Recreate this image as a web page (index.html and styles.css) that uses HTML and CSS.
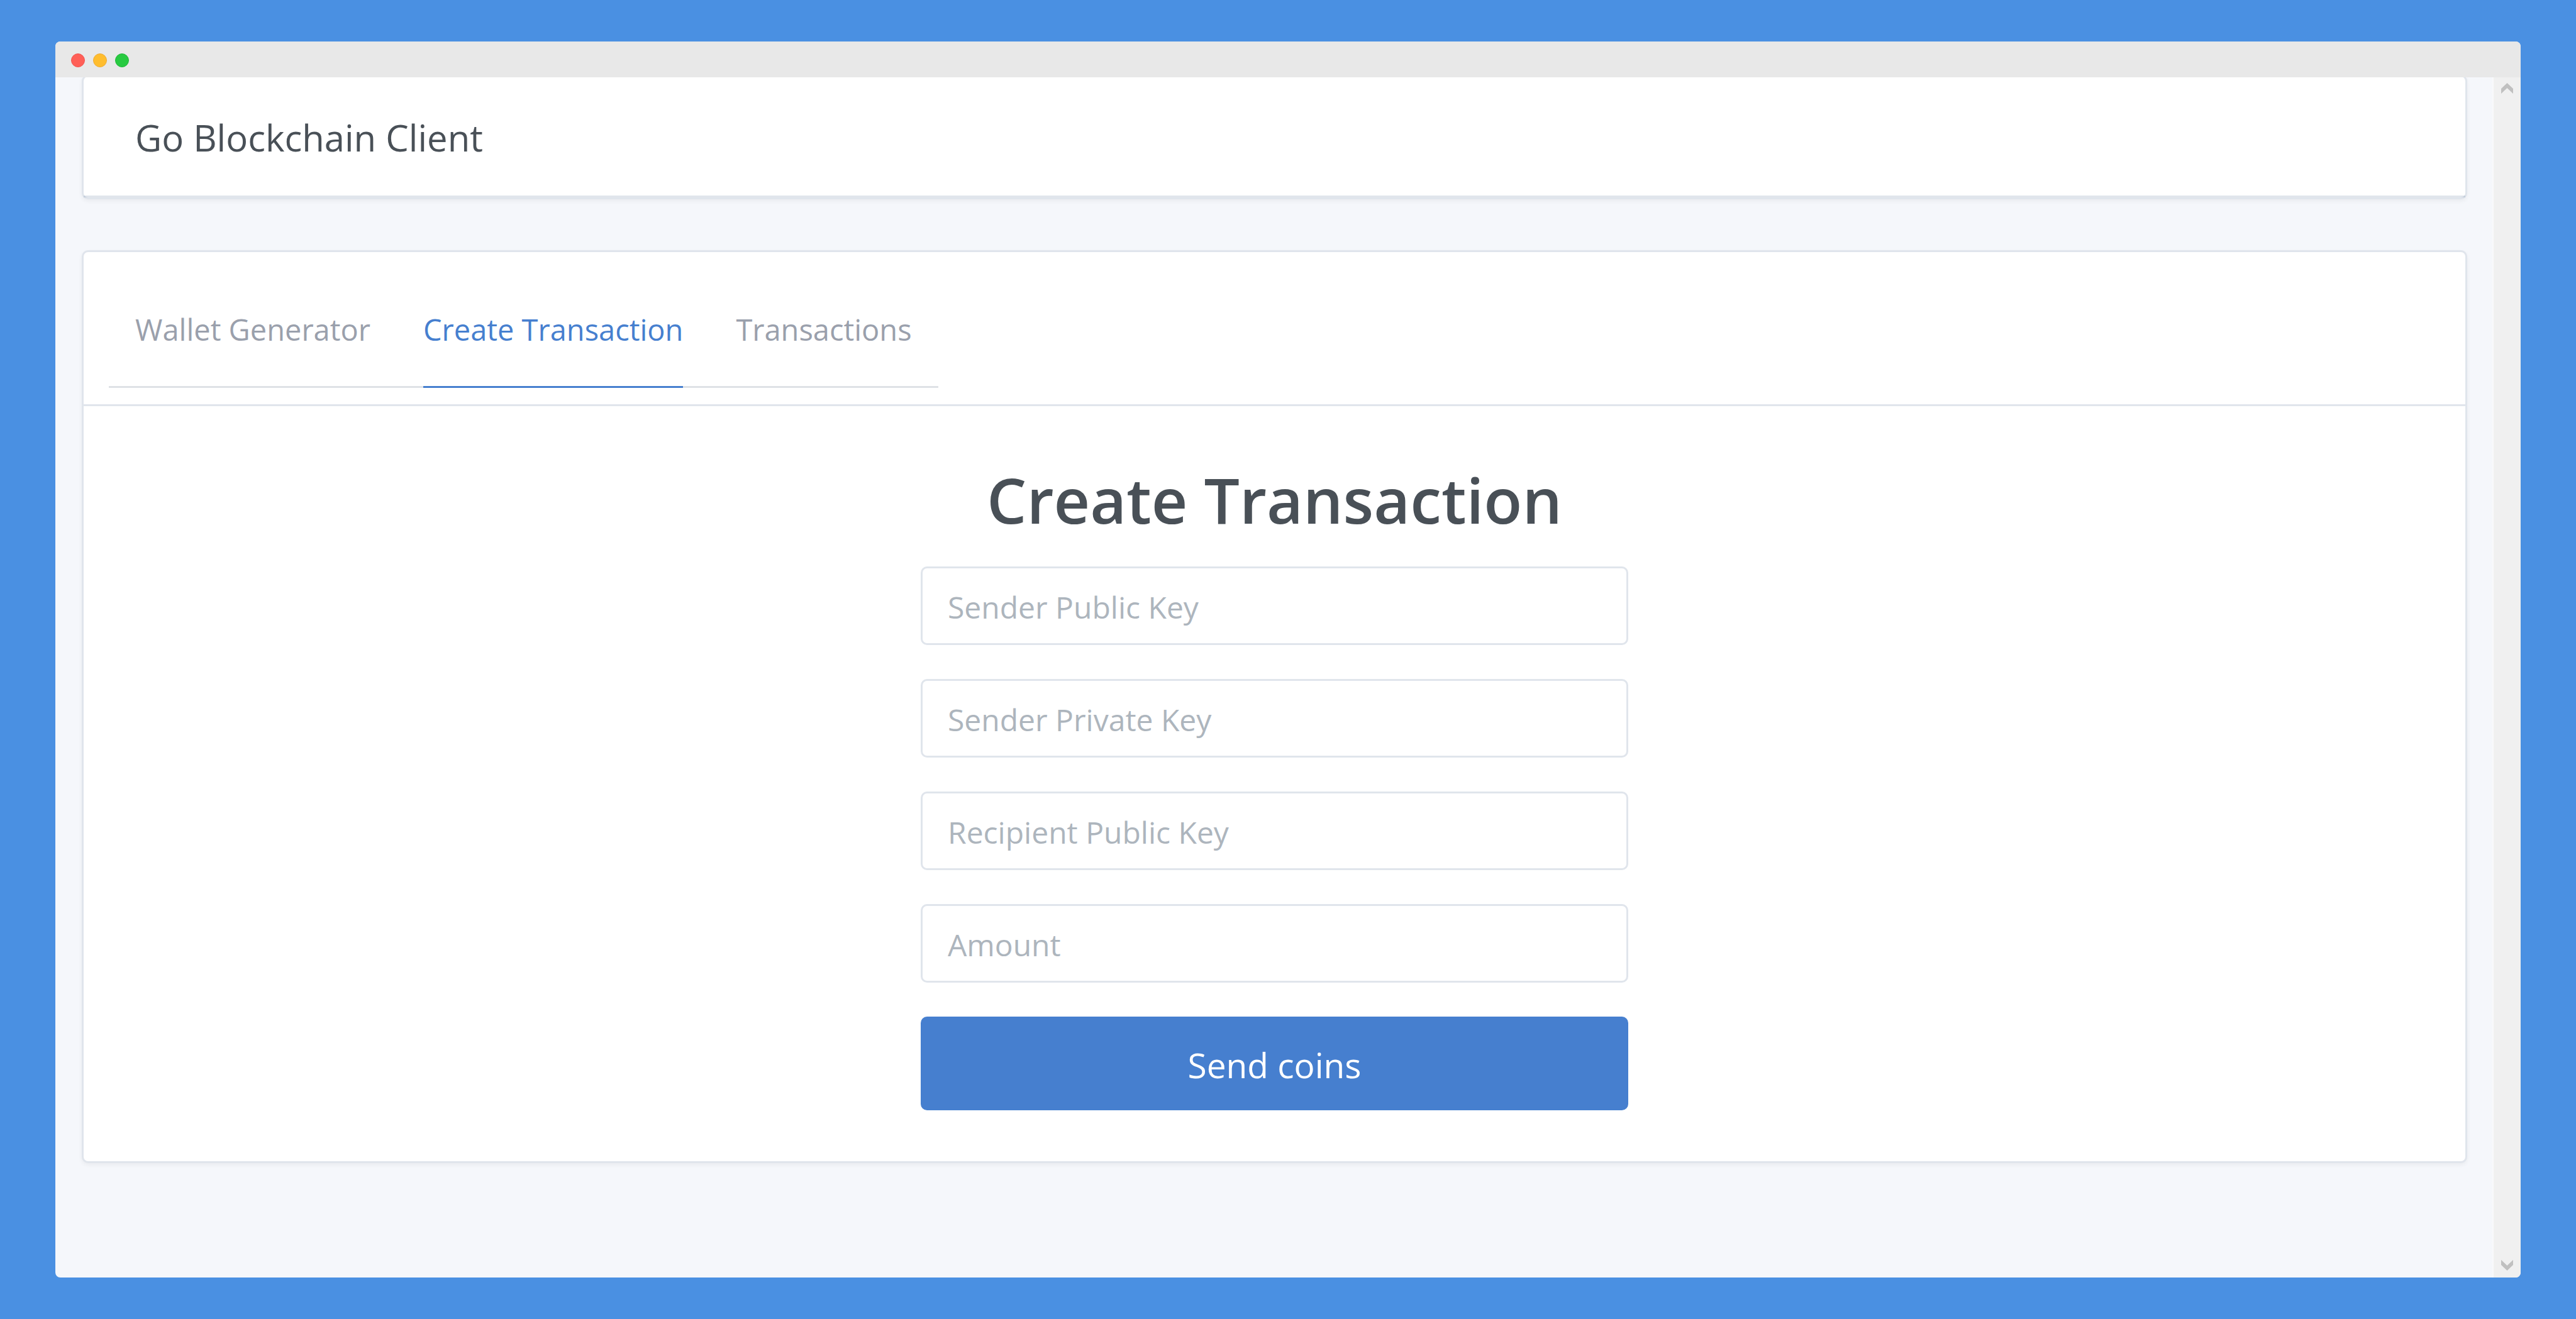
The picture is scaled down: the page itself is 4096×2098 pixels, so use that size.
FILE: index.html
```html
<!DOCTYPE html>
<html lang="en">
<head>
<meta charset="utf-8">
<title>Go Blockchain Client</title>
<link rel="stylesheet" href="styles.css">
</head>
<body>
<div class="window">
  <div class="titlebar">
    <span class="dot dot-close"></span>
    <span class="dot dot-minimize"></span>
    <span class="dot dot-zoom"></span>
  </div>
  <div class="viewport">
    <div class="page">
      <header class="card banner">
        <div class="banner-title">Go Blockchain Client</div>
      </header>
      <main class="card">
        <div class="card-header">
          <nav class="tabs">
            <a class="tab" href="#wallet">Wallet Generator</a>
            <a class="tab tab-active" href="#create" aria-current="page">Create Transaction</a>
            <a class="tab" href="#transactions">Transactions</a>
          </nav>
        </div>
        <div class="card-body">
          <h1 class="heading">Create Transaction</h1>
          <form class="form">
            <input class="field" type="text" placeholder="Sender Public Key" aria-label="Sender Public Key">
            <input class="field" type="text" placeholder="Sender Private Key" aria-label="Sender Private Key">
            <input class="field" type="text" placeholder="Recipient Public Key" aria-label="Recipient Public Key">
            <input class="field" type="text" placeholder="Amount" aria-label="Amount">
            <button class="submit" type="button">Send coins</button>
          </form>
        </div>
      </main>
    </div>
    <div class="scrollbar">
      <svg class="arrow" viewBox="0 0 19 17" aria-hidden="true"><path d="M0 9 9.500 0 19 9V17L9.500 8 0 17Z"/></svg>
      <svg class="arrow" viewBox="0 0 19 17" aria-hidden="true"><path d="M0 0 9.500 9 19 0V8L9.500 17 0 8Z"/></svg>
    </div>
  </div>
</div>
</body>
</html>
```
FILE: styles.css
```css
* {
  box-sizing: border-box;
}

body {
  display: flex;
  min-height: 100vh;
  margin: 0;
  padding: 66px 88px;
  background: #4a90e2;
  color: #495057;
  font-family: "Open Sans", "Noto Sans", sans-serif;
  font-size: 48px;
}

.window {
  display: flex;
  flex: 1;
  flex-direction: column;
  overflow: hidden;
  border-radius: 8px;
  background: #f5f7fb;
}

.titlebar {
  display: flex;
  align-items: center;
  gap: 13px;
  height: 57px;
  padding: 3px 25px 0;
  background: #e8e8e8;
}

.dot {
  width: 22px;
  height: 22px;
  border: 1px solid;
  border-radius: 50%;
}

.dot-close {
  border-color: #f2544f;
  background: #ff5f57;
}

.dot-minimize {
  border-color: #eeac34;
  background: #ffbd2e;
}

.dot-zoom {
  border-color: #20b838;
  background: #28ca41;
}

.viewport {
  display: flex;
  flex: 1;
  overflow: hidden;
}

.page {
  flex: 1;
  padding: 0 40px 0 42px;
}

.scrollbar {
  display: flex;
  flex-direction: column;
  align-items: center;
  justify-content: space-between;
  width: 45px;
  padding: 9px 0 11px;
  border-left: 2px solid #f9f9fb;
  background: #f0f0f0;
}

.arrow {
  width: 19px;
  height: 17px;
  fill: #c0c0c0;
}

.card {
  border: 3px solid rgba(0, 40, 100, 0.12);
  border-radius: 10px;
  background: #fff;
  box-shadow: 0 3px 7px rgba(0, 0, 0, 0.05);
}

.banner {
  margin: -4px 0 81px;
}

.banner-title {
  padding: 56px 82px 51px;
  border-bottom: 3px solid rgba(0, 40, 100, 0.12);
  font-size: 58px;
  line-height: 82px;
}

.card-header {
  display: flex;
  padding: 0 40px 26px;
  border-bottom: 3px solid rgba(0, 40, 100, 0.12);
}

.tabs {
  display: flex;
  gap: 84px;
  padding: 0 42px;
  border-bottom: 3px solid #dee2e6;
}

.tab {
  margin-bottom: -3px;
  padding: 85px 0 52px;
  border-bottom: 3px solid transparent;
  color: #9aa0ac;
  font-size: 47px;
  line-height: 76px;
  text-decoration: none;
}

.tab-active {
  border-color: #467fcf;
  color: #467fcf;
}

.card-body {
  padding: 88px 42px 81px;
}

.heading {
  margin: 0 0 47px;
  font-size: 100px;
  font-weight: 600;
  line-height: 120px;
  text-align: center;
}

.form {
  display: flex;
  flex-direction: column;
  gap: 54px;
  max-width: 1125px;
  margin: 0 auto;
}

.field {
  width: 100%;
  height: 125px;
  padding: 4px 40px 0;
  border: 3px solid rgba(0, 40, 100, 0.12);
  border-radius: 10px;
  background: #fff;
  color: #495057;
  font: inherit;
}

.field::placeholder {
  color: #adb5bd;
  opacity: 1;
}

.submit {
  height: 149px;
  padding: 4px 42px 0;
  border: 0;
  border-radius: 10px;
  background: #467fcf;
  color: #fff;
  font: inherit;
  font-size: 55px;
}
```
